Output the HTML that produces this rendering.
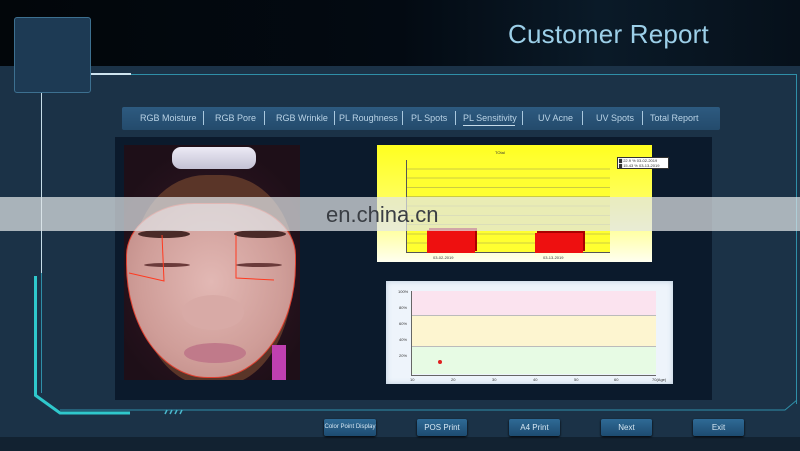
<!DOCTYPE html>
<html><head><meta charset="utf-8">
<style>
*{margin:0;padding:0;box-sizing:border-box}
body{width:800px;height:451px;overflow:hidden;background:#1a2f42;font-family:"Liberation Sans",sans-serif;position:relative}
.abs{position:absolute}
.header{left:0;top:0;width:800px;height:66px;background:linear-gradient(90deg,#02060a 0%,#030a12 50%,#0a1a28 75%,#06101a 100%)}
.title{left:508px;top:19px;font-size:26px;color:#9ccfe8;letter-spacing:0.2px}
.tabs{left:122px;top:107px;width:598px;height:23px;background:linear-gradient(#2d5a80,#244b6c);border-radius:2px}
.tab{position:absolute;top:6px;font-size:9px;color:#b9d3e6;white-space:nowrap}
.sep{position:absolute;top:4px;width:1px;height:14px;background:#a9c8de}
.content{left:115px;top:137px;width:597px;height:263px;background:#0b1a2c}
.btn{position:absolute;top:419px;height:17px;background:linear-gradient(#2f6a95,#1d4b70);border-radius:2px;color:#d6e8f4;font-size:8px;text-align:center;line-height:17px;white-space:nowrap;box-shadow:0 1px 2px #000}
.yl{position:absolute;font-size:4px;color:#333}
</style></head><body>
<div class="abs header"></div>
<div class="abs" style="left:0;top:66px;width:800px;height:371px;background:#1b3247"></div>
<div class="abs title">Customer Report</div>
<div class="abs" style="left:14px;top:17px;width:77px;height:76px;border:1px solid #3d7090;border-radius:3px;background:#1d3a54"></div>
<div class="abs" style="left:91px;top:73px;width:40px;height:2px;background:#cfe4ef"></div>
<div class="abs" style="left:131px;top:74px;width:666px;height:1px;background:#2f8fa8"></div>
<div class="abs" style="left:796px;top:74px;width:1px;height:330px;background:#2f8fa8"></div>
<div class="abs" style="left:41px;top:93px;width:1px;height:180px;background:#c7dde8"></div>
<div class="abs" style="left:41px;top:273px;width:1px;height:120px;background:#2f8fa8"></div>
<div class="abs" style="left:34px;top:276px;width:3px;height:120px;background:#2fc8cc"></div>
<svg class="abs" style="left:0;top:380px" width="800" height="40">
<path d="M35 15 L60 33 L130 33" stroke="#2fc8cc" stroke-width="3" fill="none"/>
<path d="M60 30 L785 30 L797 20" stroke="#2f8fa8" stroke-width="1" fill="none"/>
<path d="M165 34 l2 -4 M170 34 l2 -4 M175 34 l2 -4 M180 34 l2 -4" stroke="#4ab8cc" stroke-width="1.5"/>
</svg>
<div class="abs tabs">
<span class="tab" style="left:18px">RGB Moisture</span><span class="sep" style="left:81px"></span>
<span class="tab" style="left:93px">RGB Pore</span><span class="sep" style="left:142px"></span>
<span class="tab" style="left:154px">RGB Wrinkle</span><span class="sep" style="left:212px"></span>
<span class="tab" style="left:217px">PL Roughness</span><span class="sep" style="left:280px"></span>
<span class="tab" style="left:289px">PL Spots</span><span class="sep" style="left:333px"></span>
<span class="tab" style="left:341px">PL Sensitivity</span><span class="sep" style="left:400px"></span>
<div style="position:absolute;left:341px;top:18px;width:52px;height:1px;background:#c6dbe8"></div>
<span class="tab" style="left:416px">UV Acne</span><span class="sep" style="left:460px"></span>
<span class="tab" style="left:474px">UV Spots</span><span class="sep" style="left:520px"></span>
<span class="tab" style="left:528px">Total Report</span>
</div>
<div class="abs content"></div>
<div class="abs" style="left:124px;top:145px;width:176px;height:235px;background:radial-gradient(ellipse 60% 55% at 50% 55%,#3a1a28,#1e0f18);overflow:hidden">
<div class="abs" style="left:10px;top:30px;width:160px;height:210px;border-radius:45% 45% 45% 45%/40% 40% 55% 55%;background:#5a3528"></div>
<div class="abs" style="left:2px;top:58px;width:170px;height:175px;border-radius:40% 40% 48% 48%/30% 30% 65% 65%;background:radial-gradient(ellipse at 50% 45%,#e2b8b4,#cf9d98 60%,#b98480);border:1px solid #e04030"></div>
<div class="abs" style="left:14px;top:85px;width:52px;height:8px;border-radius:50%;background:#4a2a28"></div>
<div class="abs" style="left:110px;top:85px;width:52px;height:8px;border-radius:50%;background:#4a2a28"></div>
<div class="abs" style="left:20px;top:118px;width:46px;height:4px;border-radius:50%;background:#6a3a3a"></div>
<div class="abs" style="left:112px;top:118px;width:46px;height:4px;border-radius:50%;background:#6a3a3a"></div>
<div class="abs" style="left:58px;top:150px;width:62px;height:35px;border-radius:50%;background:#d8aaa6"></div>
<div class="abs" style="left:60px;top:198px;width:62px;height:20px;border-radius:50%;background:#c07a8a"></div>
<div class="abs" style="left:148px;top:200px;width:14px;height:35px;background:#c040b0"></div>
<div class="abs" style="left:48px;top:2px;width:84px;height:22px;border-radius:9px;background:linear-gradient(#eceaf5,#c4c2d4)"></div>
<svg class="abs" style="left:0;top:0" width="176" height="235"><path d="M5 128 L40 136 L38 90 M112 90 L112 133 L150 135" stroke="#ff3a20" stroke-width="1" fill="none"/></svg>
</div>
<div class="abs" style="left:377px;top:145px;width:275px;height:117px;background:linear-gradient(#ffff20 0%,#ffff60 50%,#fffff0 100%)">
<div class="abs" style="left:118px;top:5px;font-size:4px;color:#333">TOtal</div>
<div class="abs" style="left:29px;top:15px;width:204px;height:93px;border-left:1px solid #555;border-bottom:1px solid #555;background:repeating-linear-gradient(#ffff30 0,#ffff30 8.3px,#cccc40 8.3px,#cccc40 9.3px)"></div>
<div class="abs" style="left:50px;top:85px;width:48px;height:23px;background:#ee1010;box-shadow:2px -2px 0 #a00"></div>
<div class="abs" style="left:158px;top:88px;width:48px;height:20px;background:#ee1010;box-shadow:2px -2px 0 #a00"></div>
<div class="abs" style="left:240px;top:12px;width:52px;height:12px;background:#fff;border:1px solid #333;font-size:4px;line-height:5px;padding-left:1px;color:#333">▇ 22.9 % 03-02-2019<br>▇ 15.43 % 03-13-2019</div>
<div class="abs" style="left:56px;top:110px;font-size:4px;color:#333">03-02-2019</div>
<div class="abs" style="left:166px;top:110px;font-size:4px;color:#333">03-13-2019</div>
</div>
<div class="abs" style="left:386px;top:281px;width:287px;height:103px;background:#eef4fb;box-shadow:inset 0 0 6px #bcd">
<div class="abs" style="left:25px;top:10px;width:245px;height:85px;border-left:1px solid #666;border-bottom:1px solid #666">
<div style="height:25px;background:#fbe3ef;border-bottom:1px solid #bbb"></div>
<div style="height:31px;background:#fdf5d0;border-bottom:1px solid #bbb"></div>
<div style="height:27px;background:#e7fbe4"></div>
</div>
<div class="abs" style="left:52px;top:79px;width:4px;height:4px;border-radius:50%;background:#e02020"></div>
<div class="yl" style="left:12px;top:8px">100%</div><div class="yl" style="left:13px;top:24px">80%</div><div class="yl" style="left:13px;top:40px">60%</div><div class="yl" style="left:13px;top:56px">40%</div><div class="yl" style="left:13px;top:72px">20%</div>
<div class="yl" style="left:24px;top:96px">10</div><div class="yl" style="left:65px;top:96px">20</div><div class="yl" style="left:106px;top:96px">30</div><div class="yl" style="left:147px;top:96px">40</div><div class="yl" style="left:188px;top:96px">50</div><div class="yl" style="left:228px;top:96px">60</div><div class="yl" style="left:266px;top:96px">70(Age)</div>
</div>
<div class="abs" style="left:0;top:197px;width:800px;height:34px;background:rgba(225,228,232,0.72)"></div>
<div class="abs" style="left:326px;top:202px;font-size:22px;color:#3a3e44">en.china.cn</div>
<div class="abs" style="left:0;top:437px;width:800px;height:14px;background:#122231"></div>
<div class="btn" style="left:324px;width:52px;font-size:6px">Color Point Display</div>
<div class="btn" style="left:417px;width:50px">POS Print</div>
<div class="btn" style="left:509px;width:51px">A4 Print</div>
<div class="btn" style="left:601px;width:51px">Next</div>
<div class="btn" style="left:693px;width:51px">Exit</div>
</body></html>
